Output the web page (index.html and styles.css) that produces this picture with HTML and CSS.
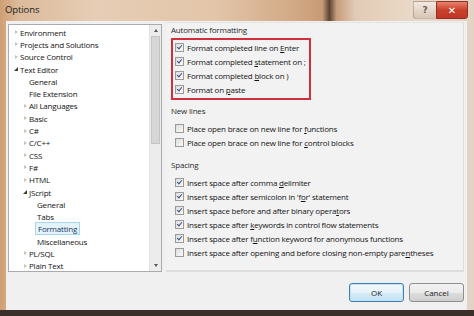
FILE: index.html
```html
<!DOCTYPE html>
<html>
<head>
  <title>Options</title>
  <link rel="stylesheet" href="styles.css">
</head>
<body>
  <div class="window">
    <div class="titlebar">
      <span class="title">Options</span>
      <div class="caption-btns">
        <span class="help">?</span>
        <span class="close">&#x2715;</span>
      </div>
    </div>

    <div class="client">
      <div class="main">
        <div class="tree">
          <ul class="tree-list">
            <li class="node lvl0"><i class="exp closed"></i>Environment</li>
            <li class="node lvl0"><i class="exp closed"></i>Projects and Solutions</li>
            <li class="node lvl0"><i class="exp closed"></i>Source Control</li>
            <li class="node lvl0"><i class="exp open"></i>Text Editor</li>
            <li class="node lvl1"><i class="exp"></i>General</li>
            <li class="node lvl1"><i class="exp"></i>File Extension</li>
            <li class="node lvl1"><i class="exp closed"></i>All Languages</li>
            <li class="node lvl1"><i class="exp closed"></i>Basic</li>
            <li class="node lvl1"><i class="exp closed"></i>C#</li>
            <li class="node lvl1"><i class="exp closed"></i>C/C++</li>
            <li class="node lvl1"><i class="exp closed"></i>CSS</li>
            <li class="node lvl1"><i class="exp closed"></i>F#</li>
            <li class="node lvl1"><i class="exp closed"></i>HTML</li>
            <li class="node lvl1"><i class="exp open"></i>JScript</li>
            <li class="node lvl2"><i class="exp"></i>General</li>
            <li class="node lvl2"><i class="exp"></i>Tabs</li>
            <li class="node lvl2"><i class="exp"></i><span class="selected">Formatting</span></li>
            <li class="node lvl2"><i class="exp"></i>Miscellaneous</li>
            <li class="node lvl1"><i class="exp closed"></i>PL/SQL</li>
            <li class="node lvl1"><i class="exp closed"></i>Plain Text</li>
          </ul>
          <div class="scrollbar">
            <span class="arrow up"></span>
            <div class="track"><div class="thumb"></div></div>
            <span class="arrow down"></span>
          </div>
        </div>

        <div class="page">
          <div class="group-title">Automatic formatting</div>
          <div class="highlight">
            <label class="check on"><span class="box"></span><span>Format completed line on <u>E</u>nter</span></label>
            <label class="check on"><span class="box"></span><span>Format completed <u>s</u>tatement on ;</span></label>
            <label class="check on"><span class="box"></span><span>Format completed <u>b</u>lock on )</span></label>
            <label class="check on"><span class="box"></span><span>Format on <u>p</u>aste</span></label>
          </div>

          <div class="group-title gap-small">New lines</div>
          <label class="check"><span class="box"></span><span>Place open brace on new line for <u>f</u>unctions</span></label>
          <label class="check"><span class="box"></span><span>Place open brace on new line for <u>c</u>ontrol blocks</span></label>

          <div class="group-title gap-big">Spacing</div>
          <label class="check on"><span class="box"></span><span>Insert space after comma <u>d</u>elimiter</span></label>
          <label class="check on"><span class="box"></span><span>Insert space after semicolon in 'f<u>o</u>r' statement</span></label>
          <label class="check on"><span class="box"></span><span>Insert space before and after binary opera<u>t</u>ors</span></label>
          <label class="check on"><span class="box"></span><span>Insert space after <u>k</u>eywords in control flow statements</span></label>
          <label class="check on"><span class="box"></span><span>Insert space after f<u>u</u>nction keyword for anonymous functions</span></label>
          <label class="check"><span class="box"></span><span>Insert space after opening and before closing non-empty pare<u>n</u>theses</span></label>
        </div>
      </div>

      <div class="buttons">
        <button class="btn default">OK</button>
        <button class="btn">Cancel</button>
      </div>
    </div>
  </div>
</body>
</html>
```

FILE: styles.css
```css
/* Options dialog */

html, body {
    margin: 0;
    padding: 0;
}

body {
    width: 474px;
    height: 316px;
    overflow: hidden;
    font-family: "Open Sans", "Noto Sans", sans-serif;
    color: #141414;
    background:
        linear-gradient(to bottom, transparent 310px, #3a2f29 310px),
        linear-gradient(to right, #cf9f74 0, #dcbb9c 4%, #e6cdb5 20%, #e3c6aa 45%, #d2a985 62%, #c89b76 68%, #5a4434 69.5%, #c89c7a 71%, #e2cbb6 75%, #ead8c6 86%, #e3d3c4 100%);
}

.window {
    display: flex;
    flex-direction: column;
    height: 310px;
}

/* title bar */

.titlebar {
    height: 21px;
    display: flex;
    align-items: center;
    justify-content: space-between;
    flex-shrink: 0;
}

.titlebar .title {
    margin-left: 5px;
    margin-top: -2px;
    font-size: 9.5px;
    letter-spacing: -0.1px;
    color: #1b1b1b;
}

.caption-btns {
    display: flex;
    align-self: flex-start;
    margin-right: 6px;
    margin-top: 1px;
}

.caption-btns span {
    display: flex;
    align-items: center;
    justify-content: center;
    height: 16px;
    font-family: "DejaVu Sans", sans-serif;
}

.help {
    width: 22px;
    font-size: 9px;
    font-weight: bold;
    color: #6b5c52;
    background: linear-gradient(rgba(255, 255, 255, .45), rgba(200, 180, 165, .5));
    border: 1px solid rgba(90, 70, 60, .3);
    border-right: none;
    border-radius: 0 0 0 3px;
}

.close {
    width: 30px;
    font-size: 10px;
    font-weight: bold;
    color: #fff;
    background: linear-gradient(#e8836e, #c8402a 50%, #c0362a);
    border: 1px solid #8e3025;
    border-radius: 0 0 3px 0;
}

/* client area */

.client {
    flex: 1;
    margin: 0 7px 0 6px;
    background: #f0f0f0;
    display: flex;
    flex-direction: column;
    padding: 1px 3px 0 2px;
}

.main {
    display: flex;
    gap: 4px;
    height: 251px;
}

/* tree */

.tree {
    margin-top: 2px;
    width: 154px;
    height: 248px;
    box-sizing: border-box;
    border: 1px solid #a9abb0;
    background: #fff;
    display: flex;
}

.tree-list {
    flex: 1;
    list-style: none;
    margin: 0;
    padding: 1px 0 0 0;
    font-size: 8px;
    letter-spacing: -0.2px;
}

.node {
    height: 12.3px;
    display: flex;
    align-items: center;
    white-space: nowrap;
}

.lvl0 { padding-left: 5px; }
.lvl1 { padding-left: 14px; }
.lvl2 { padding-left: 22px; }

.exp {
    width: 6px;
    height: 6px;
    flex-shrink: 0;
    position: relative;
}

.exp.closed:after {
    content: '';
    position: absolute;
    left: 1px;
    top: 1px;
    border-left: 3px solid #c4c4c4;
    border-top: 2px solid transparent;
    border-bottom: 2px solid transparent;
}

.exp.open:after {
    content: '';
    position: absolute;
    left: 0;
    top: 1px;
    border-right: 4px solid #3c3c3c;
    border-top: 4px solid transparent;
}

.selected {
    margin-left: -2px;
    padding: 0 2px;
    line-height: 11px;
    background: #e4f2fb;
    border: 1px solid #a8d6f0;
    color: #1b3a5c;
}

.scrollbar {
    width: 11px;
    background: #ececec;
    border-left: 1px solid #e2e2e2;
    display: flex;
    flex-direction: column;
    align-items: center;
}

.arrow {
    width: 0;
    height: 0;
    margin: 4px 0;
    border-left: 2.5px solid transparent;
    border-right: 2.5px solid transparent;
}

.arrow.up { border-bottom: 3px solid #555; }
.arrow.down { border-top: 3px solid #555; }

.track {
    flex: 1;
    width: 100%;
}

.thumb {
    margin: 0 1px;
    height: 108px;
    background: #d6d6d6;
    border: 1px solid #c4c4c4;
    box-sizing: border-box;
}

/* page */

.page {
    flex: 1;
    height: 250px;
    box-sizing: border-box;
    padding: 1px 0 0 5px;
    background: #f2f2f2;
    border-top: 1px solid #e4e4e4;
    border-right: 1px solid #dddddd;
    border-bottom: 2px solid #dcdcdc;
    font-size: 8px;
    letter-spacing: -0.2px;
}

.group-title {
    height: 12px;
    line-height: 12px;
    color: #2b2b2b;
}

.gap-small { margin-top: 5px; margin-bottom: 4px; }
.gap-big { margin-top: 10px; margin-bottom: 4px; }

.highlight {
    margin-top: 2px;
    width: 140px;
    height: 62px;
    box-sizing: border-box;
    border: 2px solid #d22f3c;
}

.check {
    display: flex;
    align-items: center;
    height: 14px;
    padding-left: 4px;
    white-space: nowrap;
    color: #141414;
}

.highlight .check {
    padding-left: 2px;
}

.check u {
    text-decoration-thickness: 1px;
    text-underline-offset: 1px;
}

.box {
    width: 7px;
    height: 7px;
    margin-right: 3px;
    border: 1px solid #9a9a9a;
    background: linear-gradient(135deg, #dcdcdc, #fafafa);
    position: relative;
    flex-shrink: 0;
}

.check.on .box:after {
    content: '';
    position: absolute;
    left: 2px;
    top: 0;
    width: 2px;
    height: 4px;
    border-right: 1.5px solid #3d4f86;
    border-bottom: 1.5px solid #3d4f86;
    transform: rotate(40deg);
}

/* buttons */

.buttons {
    display: flex;
    justify-content: flex-end;
    gap: 5px;
    padding-top: 10px;
}

.btn {
    width: 55px;
    height: 19px;
    padding: 0;
    font-family: "Open Sans", "Noto Sans", sans-serif;
    font-size: 8px;
    color: #1e1e1e;
    background: linear-gradient(#f2f2f2, #ebebeb 50%, #dddddd 51%, #cfcfcf);
    border: 1px solid #8f8f8f;
    border-radius: 3px;
}

.btn.default {
    border-color: #3c7fb1;
    background: linear-gradient(#f3f9fd, #e6f2fa 50%, #d6ebf8 51%, #c6e2f4);
    box-shadow: inset 0 0 0 1px #c2e3f7;
}
```
